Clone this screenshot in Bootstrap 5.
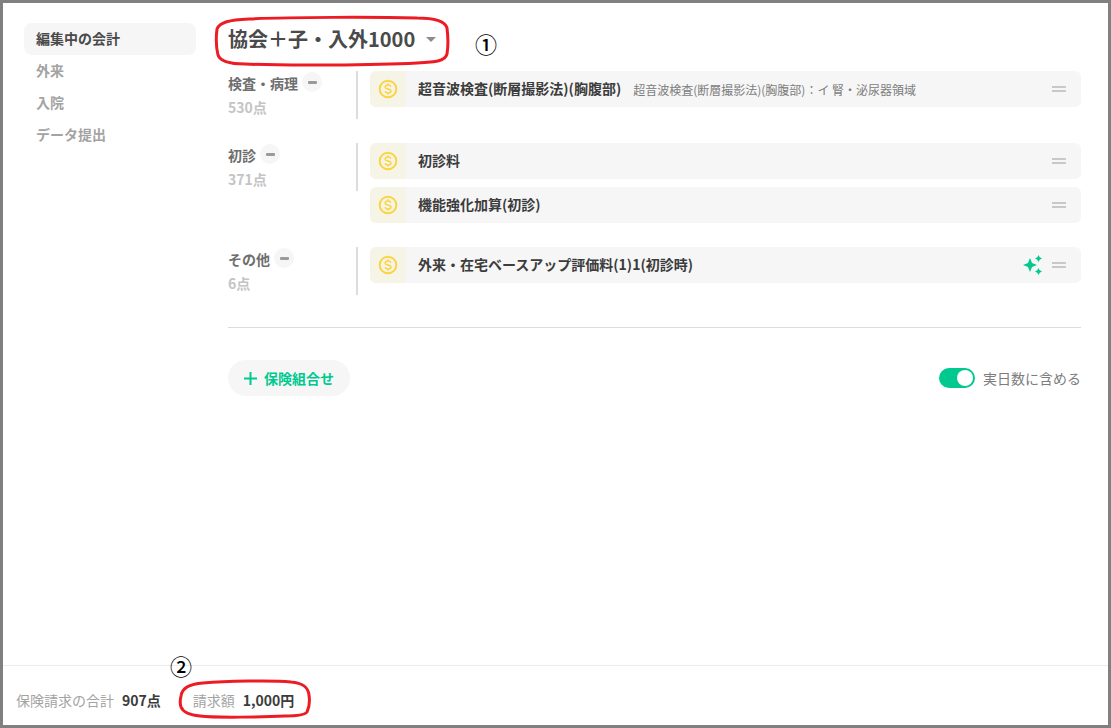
<!doctype html>
<html lang="ja"><head><meta charset="utf-8"><title>会計</title>
<link href="https://cdn.jsdelivr.net/npm/bootstrap@5.3.0/dist/css/bootstrap.min.css" rel="stylesheet">
<style>
html,body{height:100%;margin:0}
body{font-family:"Noto Sans CJK JP","Noto Sans",sans-serif;color:#4a4a4a;background:#fff;overflow:hidden}
.frame{width:1111px;height:728px;border:3px solid #808080;position:relative;display:flex;flex-direction:column}
.upper{flex:1 1 auto;display:flex;min-height:0}
.side{width:218px;flex:none;padding:20px 25px 0 21px}
.side-item{height:32px;line-height:30px;padding-left:12px;font-size:14px;font-weight:700;color:#a3a3a3;border-radius:8px}
.side-item.on{background:#f6f6f6;color:#4a4a4a}
.main{width:853px;margin-left:7px;flex:none}
.title{height:68px;padding-top:16px;font-size:20px;font-weight:700;display:flex;align-items:flex-start}
.title-text{line-height:40px}
.caret{width:0;height:0;border-left:5px solid transparent;border-right:5px solid transparent;border-top:5px solid #8c8c8c;margin:18px 0 0 11px}
.grp{display:flex;margin-bottom:24px}
.grp:last-of-type{margin-bottom:0}
.grp-h{width:130px;flex:none;border-right:2px solid #dcdcdc;margin-right:12px;padding-bottom:2px;height:48px}
.grp-name{font-size:14px;font-weight:700;color:#6e6e6e;display:flex;align-items:center;gap:4px;height:20px;margin-top:2px;line-height:20px}
.minus{width:20px;height:20px;border-radius:50%;background:#f6f6f6;display:flex;align-items:center;justify-content:center;margin-top:-2px}
.minus i{display:block;width:9px;height:3px;background:#9a9a9a;border-radius:1px}
.grp-pt{font-size:14px;font-weight:700;color:#c4c4c4;line-height:20px;margin-top:4px}
.rows{flex:1 1 auto;display:flex;flex-direction:column;gap:8px}
.rowi{height:36px;background:#f6f6f6;border-radius:6px;display:flex;align-items:center;overflow:hidden}
.coin{width:36px;height:36px;background:#f6f4e6;flex:none;display:flex;align-items:center;justify-content:center}
.rowt{font-size:14px;font-weight:700;color:#3c3c3c;margin-left:12px;white-space:nowrap;padding-bottom:2px}
.rowd{font-size:12px;color:#7d7d7d;margin-left:12px;white-space:nowrap;padding-top:2px}
.rowe{margin-left:auto;display:flex;align-items:center;gap:9px;padding-right:15px}
.grip{display:block;width:14px;height:6px;border-top:2px solid #c8c8c8;border-bottom:2px solid #c8c8c8}
.rule{border:0;border-top:1px solid #dcdcdc;margin:32px 0 0;opacity:1}
.acts{display:flex;align-items:center;justify-content:space-between;margin-top:32px}
.addbtn{height:36px;width:122px;border-radius:18px;background:#f6f6f6;border:0;color:#00c98f;font-size:14px;font-weight:700;display:flex;align-items:center;gap:7px;padding:0 0 0 16px}
.tog{display:flex;align-items:center;gap:8px;font-size:14px;color:#7d7d7d}
.sw{width:36px;height:20px;border-radius:10px;background:#00c98f;position:relative}
.sw::after{content:"";position:absolute;right:2px;top:2px;width:16px;height:16px;border-radius:50%;background:#fff}
.foot{height:60px;flex:none;border-top:1px solid #ececec;display:flex;align-items:center;padding:9px 0 0 13px;font-size:14px;color:#a3a3a3}
.foot b{color:#3c3c3c;margin-left:8px;font-weight:700}
.foot span.g2{margin-left:32px}
.mark-n{position:absolute;font-family:"Noto Sans CJK JP",sans-serif;font-size:22px;font-weight:500;line-height:24px;color:#000}
.annot{position:absolute;left:-3px;top:-3px;pointer-events:none}
</style></head><body>
<div class="frame">
<div class="upper">
<nav class="side">
<div class="side-item on">編集中の会計</div>
<div class="side-item">外来</div>
<div class="side-item">入院</div>
<div class="side-item">データ提出</div>
</nav>
<main class="main">
<div class="title"><span class="title-text">協会＋子・入外1000</span><span class="caret"></span></div>

<section class="grp"><div class="grp-h"><div class="grp-name">検査・病理<span class="minus"><i></i></span></div><div class="grp-pt">530点</div></div>
<div class="rows"><div class="rowi"><span class="coin"><svg width="20" height="20" viewBox="0 0 20 20"><circle cx="10" cy="10" r="8.300" fill="none" stroke="#f9d544" stroke-width="2"/><path d="M12.800 7.800c-.3-1.100-1.400-1.800-2.800-1.800-1.600 0-2.800.8-2.800 2 0 2.800 5.700 1.300 5.700 4.100 0 1.200-1.200 1.900-2.900 1.900-1.500 0-2.600-.7-2.900-1.800M10 4.200V6M10 14v1.800" fill="none" stroke="#f9d544" stroke-width="1.600"/></svg></span><span class="rowt">超音波検査(断層撮影法)(胸腹部)</span><span class="rowd">超音波検査(断層撮影法)(胸腹部)：イ 腎・泌尿器領域</span><span class="rowe"><span class="grip"></span></span></div></div></section>

<section class="grp"><div class="grp-h"><div class="grp-name">初診<span class="minus"><i></i></span></div><div class="grp-pt">371点</div></div>
<div class="rows"><div class="rowi"><span class="coin"><svg width="20" height="20" viewBox="0 0 20 20"><circle cx="10" cy="10" r="8.300" fill="none" stroke="#f9d544" stroke-width="2"/><path d="M12.800 7.800c-.3-1.100-1.400-1.800-2.800-1.800-1.600 0-2.800.8-2.800 2 0 2.800 5.700 1.300 5.700 4.100 0 1.200-1.200 1.900-2.900 1.900-1.500 0-2.600-.7-2.900-1.800M10 4.200V6M10 14v1.800" fill="none" stroke="#f9d544" stroke-width="1.600"/></svg></span><span class="rowt">初診料</span><span class="rowe"><span class="grip"></span></span></div>
<div class="rowi"><span class="coin"><svg width="20" height="20" viewBox="0 0 20 20"><circle cx="10" cy="10" r="8.300" fill="none" stroke="#f9d544" stroke-width="2"/><path d="M12.800 7.800c-.3-1.100-1.400-1.800-2.800-1.800-1.600 0-2.800.8-2.800 2 0 2.800 5.700 1.300 5.700 4.100 0 1.200-1.200 1.900-2.900 1.900-1.500 0-2.600-.7-2.900-1.800M10 4.200V6M10 14v1.800" fill="none" stroke="#f9d544" stroke-width="1.600"/></svg></span><span class="rowt">機能強化加算(初診)</span><span class="rowe"><span class="grip"></span></span></div></div></section>

<section class="grp"><div class="grp-h"><div class="grp-name">その他<span class="minus"><i></i></span></div><div class="grp-pt">6点</div></div>
<div class="rows"><div class="rowi"><span class="coin"><svg width="20" height="20" viewBox="0 0 20 20"><circle cx="10" cy="10" r="8.300" fill="none" stroke="#f9d544" stroke-width="2"/><path d="M12.800 7.800c-.3-1.100-1.400-1.800-2.800-1.800-1.600 0-2.800.8-2.800 2 0 2.800 5.700 1.300 5.700 4.100 0 1.200-1.200 1.900-2.900 1.900-1.500 0-2.600-.7-2.900-1.800M10 4.200V6M10 14v1.800" fill="none" stroke="#f9d544" stroke-width="1.600"/></svg></span><span class="rowt">外来・在宅ベースアップ評価料(1)1(初診時)</span><span class="rowe"><svg width="20" height="20" viewBox="0 0 20 20" fill="#00c98f"><path d="M7 3 9 8l5 2-5 2-2 5-2-5-5-2 5-2z"/><path d="M15.500 0l1.200 2.300 2.300 1.200-2.300 1.200L15.500 7l-1.200-2.300L12 3.500l2.300-1.200z"/><path d="M15.500 13l1.200 2.300 2.300 1.200-2.300 1.200-1.200 2.300-1.200-2.300-2.300-1.200 2.300-1.200z"/></svg><span class="grip"></span></span></div></div></section>

<hr class="rule">
<div class="acts"><button class="addbtn" type="button"><svg width="13" height="13" viewBox="0 0 13 13"><path d="M6.500 0v13M0 6.500h13" stroke="#00c98f" stroke-width="2"/></svg>保険組合せ</button>
<div class="tog"><span class="sw"></span>実日数に含める</div></div>
</main>
</div>
<footer class="foot"><span>保険請求の合計</span><b>907点</b><span class="g2">請求額</span><b>1,000円</b></footer>
<div class="mark-n" style="left:472px;top:28px">①</div>
<div class="mark-n" style="left:167px;top:650px">②</div>
<svg class="annot" width="1111" height="728" fill="none" stroke="#ed1c24" stroke-width="3"><path d="M217 29c3-7 12-9 32-10 40-2 130-2 168-1 16 0 28 3 30 10 1 8 1 20 0 26-2 7-10 8-30 9-40 2-130 3-172 1-16 0-25-3-27-9-2-8-2-18-1-26z"/><path d="M181 696c1-8 8-12 22-13 22-2 70-3 88-1 12 1 17 5 18 13 1 7 0 13-2 17-2 3-8 4-22 4-20 1-70 2-85 0-11-1-17-4-19-9-1-3-1-7 0-11z"/></svg>
</div>
</body></html>
